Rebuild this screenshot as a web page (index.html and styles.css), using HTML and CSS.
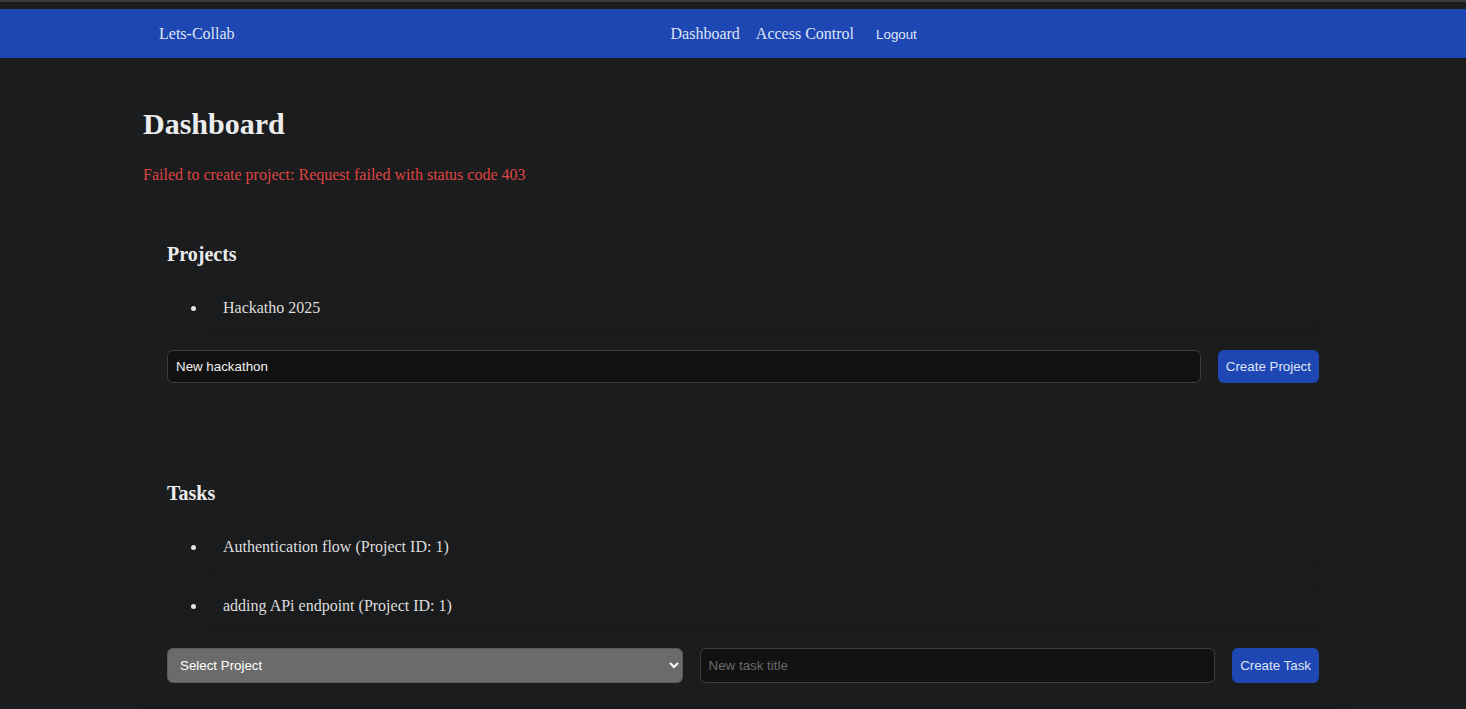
FILE: index.html
```html
<html>

<head>
	<title>Lets-Collab</title>
	<meta name="viewport" content="width=device-width, initial-scale=1">
	<meta http-equiv="Content-Type" content="text/html; charset=UTF-8">
	<link rel="stylesheet" href="styles.css">
</head>

<body>
	<div class="navbar">
		<div class="container nav-inner">
			<div class="brand">Lets-Collab</div>
			<div class="links">
				<a href="#">Dashboard</a>
				<a href="#">Access Control</a>
				<button class="logout">Logout</button>
			</div>
		</div>
	</div>

	<div id="main" class="container">
		<h1>Dashboard</h1>
		<p class="error">Failed to create project: Request failed with status code 403</p>

		<div class="card">
			<h3>Projects</h3>
			<ul>
				<li>Hackatho 2025</li>
			</ul>
			<form class="row" onsubmit="return false">
				<input type="text" class="grow" value="New hackathon">
				<button type="submit">Create Project</button>
			</form>
		</div>

		<div class="card">
			<h3>Tasks</h3>
			<ul>
				<li>Authentication flow (Project ID: 1)</li>
				<li>adding APi endpoint (Project ID: 1)</li>
			</ul>
			<form class="row" onsubmit="return false">
				<select class="grow">
					<option>Select Project</option>
					<option>Hackatho 2025</option>
				</select>
				<input type="text" class="grow" placeholder="New task title">
				<button type="submit">Create Task</button>
			</form>
		</div>
	</div>
</body>

</html>
```

FILE: styles.css
```css
body {
	margin: 0;
	padding-top: 7px;
	border-top: 2px solid #3c3c3e;
	background: #1b1c1e;
	color: #dedede;
	font-family: "Liberation Serif", serif;
	font-size: 16px;
	overflow: hidden;
}

.container {
	width: 1200px;
	margin-left: 143px;
}

.navbar {
	background: #1e47b3;
	color: #dfe5f5;
}

.nav-inner {
	display: flex;
	align-items: center;
	height: 49px;
	padding: 0 16px;
	box-sizing: border-box;
}

.links {
	display: flex;
	align-items: center;
	margin-left: 436px;
	gap: 16px;
}

.links a {
	color: #dfe5f5;
	text-decoration: none;
}

.logout {
	background: none;
	border: none;
	color: #dfe5f5;
	font-family: "Liberation Sans", Arial, sans-serif;
	font-size: 13.33px;
	padding: 6px;
	margin-top: 2px;
}

#main {
	padding-top: 28px;
}

h1 {
	font-size: 30px;
	margin: 21px 0;
	color: #ececec;
}

.error {
	color: #df4540;
	margin: 25px 0 17px 0;
}

.card {
	padding: 24px;
	margin-bottom: 33px;
	border-radius: 8px;
	box-shadow: 0 1px 8px rgba(0, 0, 0, 0.07);
}

h3 {
	font-size: 20px;
	margin: 18px 0 19px 0;
	color: #ececec;
}

ul {
	margin: 16px 0 19px 0;
	padding-left: 40px;
}

li {
	padding: 14px 16px;
	margin-bottom: 13px;
	border-radius: 6px;
	background: #1a1b1d;
	box-shadow: 0 1px 4px rgba(0, 0, 0, 0.12);
}

li::marker {
	color: #e6e6e6;
}

.row {
	display: flex;
	gap: 17px;
	margin: 0;
}

.grow {
	flex: 1;
}

input,
select,
button {
	font-family: "Liberation Sans", Arial, sans-serif;
	font-size: 13.33px;
}

input {
	background: #111111;
	color: #f0f0f0;
	border: 1px solid #3d3d3f;
	border-radius: 6px;
	padding: 8px;
}

input::placeholder {
	color: #6a6a6a;
}

select {
	background: #6b6b6b;
	color: #ffffff;
	border: 1px solid #5a5a5a;
	border-radius: 6px;
	padding: 8px 8px;
	height: 35px;
}

.row button {
	background: #1e47b3;
	color: #dfe5f5;
	border: none;
	border-radius: 6px;
	padding: 8px 8px;
}
```
